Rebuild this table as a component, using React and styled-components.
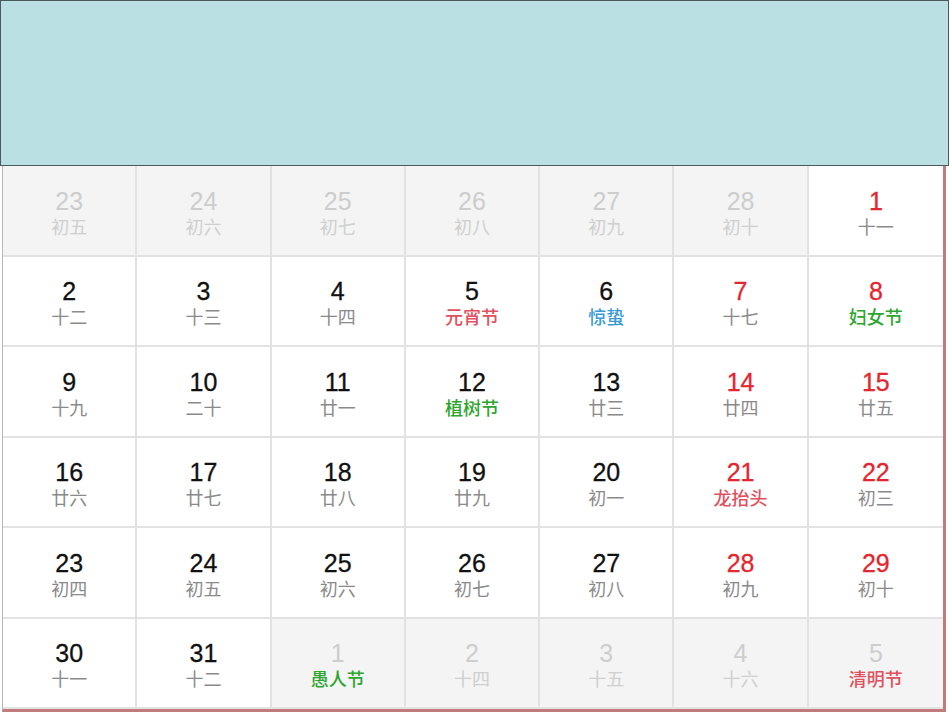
import React from "react";
import styled, { createGlobalStyle } from "styled-components";

const GlobalStyle = createGlobalStyle`
  html, body {
    margin: 0;
    padding: 0;
    background: #ffffff;
  }
  * {
    box-sizing: border-box;
  }
`;

// kind: "other" = prev/next month, "day" = this month
// weekend -> red number, fest -> coloured festival text
const days = [
  { n: 23, l: "初五", kind: "other" },
  { n: 24, l: "初六", kind: "other" },
  { n: 25, l: "初七", kind: "other" },
  { n: 26, l: "初八", kind: "other" },
  { n: 27, l: "初九", kind: "other" },
  { n: 28, l: "初十", kind: "other" },
  { n: 1, l: "十一", kind: "day", weekend: true },

  { n: 2, l: "十二", kind: "day" },
  { n: 3, l: "十三", kind: "day" },
  { n: 4, l: "十四", kind: "day" },
  { n: 5, l: "元宵节", kind: "day", fest: "red" },
  { n: 6, l: "惊蛰", kind: "day", fest: "blue" },
  { n: 7, l: "十七", kind: "day", weekend: true },
  { n: 8, l: "妇女节", kind: "day", weekend: true, fest: "green" },

  { n: 9, l: "十九", kind: "day" },
  { n: 10, l: "二十", kind: "day" },
  { n: 11, l: "廿一", kind: "day" },
  { n: 12, l: "植树节", kind: "day", fest: "green" },
  { n: 13, l: "廿三", kind: "day" },
  { n: 14, l: "廿四", kind: "day", weekend: true },
  { n: 15, l: "廿五", kind: "day", weekend: true },

  { n: 16, l: "廿六", kind: "day" },
  { n: 17, l: "廿七", kind: "day" },
  { n: 18, l: "廿八", kind: "day" },
  { n: 19, l: "廿九", kind: "day" },
  { n: 20, l: "初一", kind: "day" },
  { n: 21, l: "龙抬头", kind: "day", weekend: true, fest: "red" },
  { n: 22, l: "初三", kind: "day", weekend: true },

  { n: 23, l: "初四", kind: "day" },
  { n: 24, l: "初五", kind: "day" },
  { n: 25, l: "初六", kind: "day" },
  { n: 26, l: "初七", kind: "day" },
  { n: 27, l: "初八", kind: "day" },
  { n: 28, l: "初九", kind: "day", weekend: true },
  { n: 29, l: "初十", kind: "day", weekend: true },

  { n: 30, l: "十一", kind: "day" },
  { n: 31, l: "十二", kind: "day" },
  { n: 1, l: "愚人节", kind: "other", fest: "green" },
  { n: 2, l: "十四", kind: "other" },
  { n: 3, l: "十五", kind: "other" },
  { n: 4, l: "十六", kind: "other" },
  { n: 5, l: "清明节", kind: "other", fest: "red" },
];

const festColors = {
  red: "#e0505e",
  blue: "#3a9ad6",
  green: "#2ea52e",
};

const App = () => {
  return (
    <Page>
      <GlobalStyle />
      <Banner />
      <Calendar>
        {days.map((d, i) => (
          <Cell key={i} $other={d.kind === "other"} $lastCol={i % 7 === 6}>
            <Num $other={d.kind === "other"} $weekend={d.weekend}>
              {d.n}
            </Num>
            <Lunar $other={d.kind === "other"} $fest={d.fest}>
              {d.l}
            </Lunar>
          </Cell>
        ))}
      </Calendar>
    </Page>
  );
};

export default App;

const Page = styled.div`
  width: 950px;
  height: 713px;
  overflow: hidden;
  background: #ffffff;
`;

const Banner = styled.div`
  width: 949px;
  height: 166px;
  background-color: #bbe0e3;
  border: 1px solid #4a5a5c;
`;

const Calendar = styled.div`
  margin-left: 2px;
  width: 944px;
  display: grid;
  grid-template-columns: repeat(7, 1fr);
  grid-auto-rows: 90.5px;
  border-left: 1px solid #b8b8b8;
  border-right: 3px solid #c27a7d;
  border-bottom: 3px solid #c27a7d;
`;

const Cell = styled.div`
  display: flex;
  flex-direction: column;
  align-items: center;
  justify-content: center;
  padding-top: 3px;
  background: ${(p) => (p.$other ? "#f4f4f4" : "#ffffff")};
  border-right: ${(p) => (p.$lastCol ? "none" : "2px solid #e2e2e2")};
  border-bottom: 2px solid #e2e2e2;
`;

const Num = styled.div`
  font-family: "Liberation Sans", Arial, sans-serif;
  font-size: 25px;
  line-height: 28px;
  color: ${(p) =>
    p.$other ? "#cdcdcd" : p.$weekend ? "#e3262f" : "#111111"};
  -webkit-text-stroke: ${(p) => (p.$other ? "0" : "0.3px")};
`;

const Lunar = styled.div`
  font-family: "Noto Sans CJK SC", "Noto Sans", sans-serif;
  font-size: 18px;
  line-height: 22px;
  font-weight: ${(p) => (p.$fest ? 500 : 400)};
  color: ${(p) =>
    p.$fest ? festColors[p.$fest] : p.$other ? "#cfcfcf" : "#8a8a8a"};
`;
